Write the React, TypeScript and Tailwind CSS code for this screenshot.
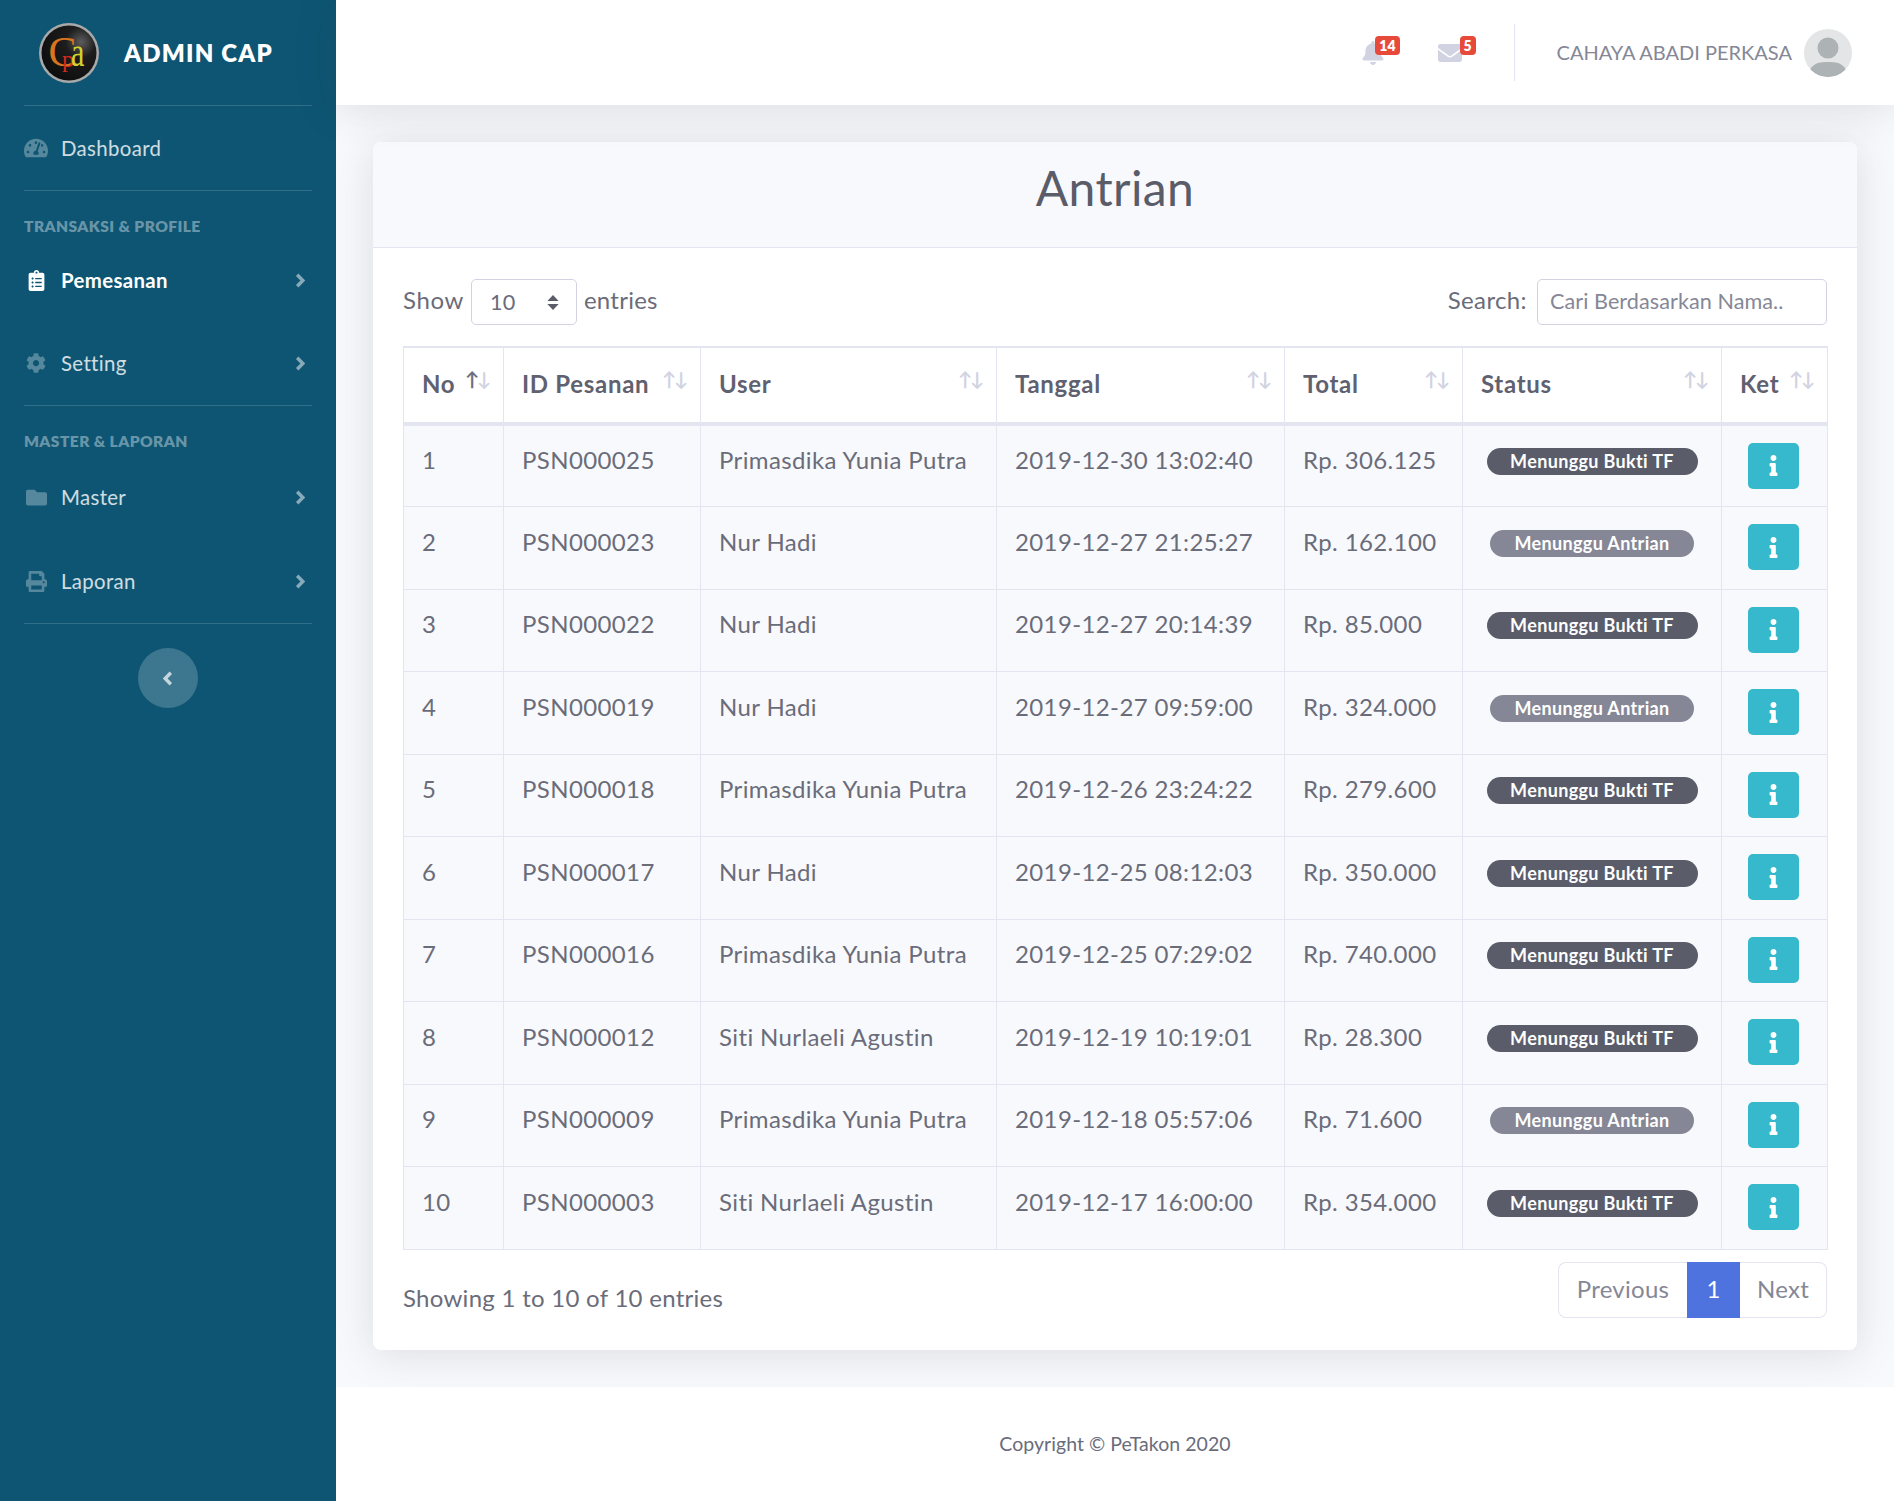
import {
  FaBell,
  FaClipboardList,
  FaCog,
  FaEnvelope,
  FaFolder,
  FaInfo,
  FaPrint,
  FaTachometerAlt,
} from "react-icons/fa";
import type { ReactNode } from "react";

const rows = [
  ["1", "PSN000025", "Primasdika Yunia Putra", "2019-12-30 13:02:40", "Rp. 306.125", "tf"],
  ["2", "PSN000023", "Nur Hadi", "2019-12-27 21:25:27", "Rp. 162.100", "antri"],
  ["3", "PSN000022", "Nur Hadi", "2019-12-27 20:14:39", "Rp. 85.000", "tf"],
  ["4", "PSN000019", "Nur Hadi", "2019-12-27 09:59:00", "Rp. 324.000", "antri"],
  ["5", "PSN000018", "Primasdika Yunia Putra", "2019-12-26 23:24:22", "Rp. 279.600", "tf"],
  ["6", "PSN000017", "Nur Hadi", "2019-12-25 08:12:03", "Rp. 350.000", "tf"],
  ["7", "PSN000016", "Primasdika Yunia Putra", "2019-12-25 07:29:02", "Rp. 740.000", "tf"],
  ["8", "PSN000012", "Siti Nurlaeli Agustin", "2019-12-19 10:19:01", "Rp. 28.300", "tf"],
  ["9", "PSN000009", "Primasdika Yunia Putra", "2019-12-18 05:57:06", "Rp. 71.600", "antri"],
  ["10", "PSN000003", "Siti Nurlaeli Agustin", "2019-12-17 16:00:00", "Rp. 354.000", "tf"],
];

const columns = [
  { label: "No", width: "w-[100px]", active: true },
  { label: "ID Pesanan", width: "w-[197px]" },
  { label: "User", width: "w-[296px]" },
  { label: "Tanggal", width: "w-[288px]" },
  { label: "Total", width: "w-[178px]" },
  { label: "Status", width: "w-[259px]" },
  { label: "Ket", width: "w-[106px]" },
];

function Logo() {
  return (
    <svg viewBox="0 0 60 60" className="h-[60px] w-[60px] shrink-0">
      <defs>
        <radialGradient id="ball" cx="0.72" cy="0.3" r="0.8">
          <stop offset="0" stopColor="#5c5c5c" />
          <stop offset="0.35" stopColor="#1d1d1d" />
          <stop offset="1" stopColor="#0d0d0d" />
        </radialGradient>
      </defs>
      <circle cx="30" cy="30" r="30" fill="#a9a9a9" />
      <circle cx="30" cy="30" r="27.5" fill="url(#ball)" />
      <g fontFamily="'Liberation Serif', serif">
        <text x="9.5" y="43" fontSize="42" fill="#d9741f">C</text>
        <text x="23" y="44" fontSize="24" fill="#d42a1e">p</text>
        <text transform="translate(32 43) scale(0.72 1)" fontSize="42" fill="#d2d32a">a</text>
      </g>
    </svg>
  );
}

function Chevron({ dir = "right", className }: { dir?: "left" | "right"; className: string }) {
  return (
    <svg viewBox="0 0 10 15" className={`h-[15px] w-[10px] ${className}`}>
      <path d={dir === "right" ? "M2.2 1.8 L7.8 7.5 L2.2 13.2" : "M7.8 1.8 L2.2 7.5 L7.8 13.2"} fill="none" stroke="currentColor" strokeWidth="3.4" />
    </svg>
  );
}

function NavItem({
  icon,
  label,
  active,
  caret = true,
}: {
  icon: ReactNode;
  label: string;
  active?: boolean;
  caret?: boolean;
}) {
  return (
    <div className="flex h-[84px] items-center px-6">
      <span className={`flex w-[24px] justify-center ${active ? "text-white" : "text-white/30"}`}>{icon}</span>
      <span className={`ml-[13px] flex-1 text-[20.4px] tracking-[0.35px] ${active ? "font-bold text-white" : "text-white/80"}`}>{label}</span>
      {caret && <Chevron className="mr-[7px] text-white/50" />}
    </div>
  );
}

function SectionTitle({ children }: { children: ReactNode }) {
  return <div className="px-6 text-[15.6px] font-extrabold leading-[24px] tracking-[0.4px] text-white/40">{children}</div>;
}

function SortArrows({ active }: { active?: boolean }) {
  return (
    <span className="flex text-[19px] leading-none tracking-normal">
      <span className={`flex w-[12px] justify-center ${active ? "text-[#6e707e]" : "text-[#d1d3e2]"}`}>↑</span>
      <span className="flex w-[12px] justify-center text-[#d1d3e2]">↓</span>
    </span>
  );
}

function Sidebar() {
  return (
    <aside className="flex w-[336px] shrink-0 flex-col bg-[#0d5573]">
      <div className="flex h-[105px] items-center pl-[39px]">
        <Logo />
        <span className="ml-[25px] text-[24px] font-extrabold tracking-[0.05em] text-white">ADMIN CAP</span>
      </div>
      <div className="mx-6 border-t border-white/15" />
      <NavItem icon={<FaTachometerAlt className="text-[24px]" />} label="Dashboard" caret={false} />
      <div className="mx-6 border-t border-white/15" />
      <div className="pt-[23px]"><SectionTitle>TRANSAKSI &amp; PROFILE</SectionTitle></div>
      <div className="-mb-px"><NavItem icon={<FaClipboardList className="text-[21px]" />} label="Pemesanan" active /></div>
      <NavItem icon={<FaCog className="text-[20px]" />} label="Setting" />
      <div className="mx-6 border-t border-white/15" />
      <div className="pt-[23px]"><SectionTitle>MASTER &amp; LAPORAN</SectionTitle></div>
      <div className="mt-[2px]"><NavItem icon={<FaFolder className="text-[21px]" />} label="Master" /></div>
      <NavItem icon={<FaPrint className="text-[21px]" />} label="Laporan" />
      <div className="mx-6 border-t border-white/15" />
      <div className="flex justify-center pt-6">
        <button className="flex h-[60px] w-[60px] items-center justify-center rounded-full bg-white/20">
          <Chevron dir="left" className="text-white/70" />
        </button>
      </div>
    </aside>
  );
}

function Topbar() {
  return (
    <header className="relative z-10 flex h-[105px] items-center justify-end bg-white pr-[42px] shadow-[0_4px_42px_rgba(58,59,69,0.15)]">
      <div className="relative mr-[53px] text-[#d1d3e2]">
        <FaBell className="text-[24px]" />
        <span className="absolute -right-[15px] -top-[5px] flex h-[19px] min-w-[23px] items-center justify-center rounded-[4px] bg-[#e74a3b] px-1 text-[14px] font-extrabold text-white">14</span>
      </div>
      <div className="relative mr-[52px] text-[#d1d3e2]">
        <FaEnvelope className="text-[24px]" />
        <span className="absolute -right-[14px] -top-[5px] flex h-[19px] min-w-[16px] items-center justify-center rounded-[4px] bg-[#e74a3b] text-[14px] font-extrabold text-white">5</span>
      </div>
      <div className="h-[57px] border-l border-[#e3e6f0]" />
      <span className="ml-[42px] pb-[2px] text-[20px] text-[#858796]">CAHAYA ABADI PERKASA</span>
      <span className="ml-3 flex h-12 w-12 items-center justify-center overflow-hidden rounded-full bg-[#e3e5e7]">
        <svg viewBox="0 0 48 48" className="h-12 w-12">
          <circle cx="24" cy="19" r="10.5" fill="#adb2b5" />
          <path d="M6 41 C10 33 17 33 24 33 C31 33 38 33 42 41 C37 46 31 48 24 48 C17 48 11 46 6 41 Z" fill="#adb2b5" />
        </svg>
      </span>
    </header>
  );
}

function StatusBadge({ kind }: { kind: string }) {
  return kind === "tf" ? (
    <span className="inline-flex h-[27px] w-[211px] items-center justify-center rounded-full bg-[#5a5c69] text-[18px] font-bold tracking-[0.35px] text-white">Menunggu Bukti TF</span>
  ) : (
    <span className="inline-flex h-[27px] w-[204px] items-center justify-center rounded-full bg-[#858796] text-[18px] font-bold tracking-[0.35px] text-white">Menunggu Antrian</span>
  );
}

function OrdersTable() {
  return (
    <table className="w-[1424px] table-fixed border-collapse text-[24px] tracking-[0.38px] text-[#6a6c7a]">
      <colgroup>
        {columns.map((c) => (
          <col key={c.label} className={c.width} />
        ))}
      </colgroup>
      <thead>
        <tr className="h-[77px]">
          {columns.map((c) => (
            <th key={c.label} className="border border-t-2 border-b-4 border-[#e3e6f0] px-[18px] pb-[3px] text-left font-bold text-[#5f6170]">
              <div className="flex items-start justify-between">
                <span className="tracking-[0.7px] whitespace-nowrap">{c.label}</span>
                <span className="-mr-[5px] mt-[3px]">
                  <SortArrows active={c.active} />
                </span>
              </div>
            </th>
          ))}
        </tr>
      </thead>
      <tbody>
        {rows.map((r) => (
          <tr key={r[0]} className="h-[82.5px] bg-[#f8f9fc]">
            {r.slice(0, 5).map((v, i) => (
              <td key={i} className="border border-[#e3e6f0] px-[18px] pb-[12px] align-middle whitespace-nowrap">{v}</td>
            ))}
            <td className="border border-[#e3e6f0] pb-[14px] text-center align-middle">
              <StatusBadge kind={r[5]} />
            </td>
            <td className="border border-[#e3e6f0] pr-[2px] pb-[1px] text-center align-middle">
              <button className="inline-flex h-[46px] w-[51px] items-center justify-center rounded-[5px] bg-[#36b9cc] text-[21px] text-white">
                <FaInfo />
              </button>
            </td>
          </tr>
        ))}
      </tbody>
    </table>
  );
}

function OrdersCard() {
  return (
    <section className="rounded-[8px] bg-white shadow-[0_4px_42px_rgba(58,59,69,0.15)]">
      <div className="flex h-[106px] items-center justify-center rounded-t-[8px] border-b border-[#e3e6f0] bg-[#f8f9fc] pb-[14px]">
        <h1 className="text-[48px] tracking-[0.4px] text-[#5a5c69]">Antrian</h1>
      </div>
      <div className="px-[30px] pb-[32px]">
        <div className="flex h-[98px] items-center justify-between pt-[10px] text-[24px] tracking-[0.38px] text-[#6a6c7a]">
          <label className="flex items-center">
            <span className="pb-[5px] tracking-[0.6px]">Show</span>
            <span className="mx-[7px] flex h-[46px] w-[106px] items-center justify-between rounded-[5px] border border-[#d1d3e2] pl-[18px] pr-[17px] text-[21.6px]">
              10
              <svg viewBox="0 0 12 16" className="h-[15px] w-3 fill-[#5a5c69]">
                <path d="M6 0 L12 6.5 H0 Z M6 16 L0 9.5 H12 Z" />
              </svg>
            </span>
            <span className="pb-[5px] tracking-[0.25px]">entries</span>
          </label>
          <label className="flex items-center">
            <span className="pb-[4px]">Search:</span>
            <span className="ml-[10px] flex h-[46px] w-[290px] items-center rounded-[5px] border border-[#d1d3e2] px-3 pb-[2px] text-[21.6px] tracking-[0.06px] text-[#858796]">
              Cari Berdasarkan Nama..
            </span>
          </label>
        </div>
        <OrdersTable />
        <div className="flex items-start justify-between pt-[12px] text-[24px] tracking-[0.28px]">
          <div className="pt-[18px] text-[#6a6c7a]">Showing 1 to 10 of 10 entries</div>
          <div className="flex h-[56px] text-[#858796]">
            <span className="flex w-[129px] items-center justify-center rounded-l-[8px] border border-r-0 border-[#e3e6f0] pb-[2px]">Previous</span>
            <span className="flex w-[53px] items-center justify-center bg-[#4e73df] pb-[2px] text-white">1</span>
            <span className="flex w-[87px] items-center justify-center rounded-r-[8px] border border-l-0 border-[#e3e6f0] pb-[2px]">Next</span>
          </div>
        </div>
      </div>
    </section>
  );
}

export default function App() {
  return (
    <div className="flex min-h-[1501px] font-['Lato','Noto_Sans',sans-serif]">
      <Sidebar />
      <div className="flex min-w-0 flex-1 flex-col">
        <Topbar />
        <main className="flex-1 bg-[#f8f9fc] px-[37px] py-[37px]">
          <OrdersCard />
        </main>
        <footer className="flex h-[114px] items-center justify-center bg-white text-[19.5px] tracking-[0.05px] text-[#6a6c7a]">
          Copyright © PeTakon 2020
        </footer>
      </div>
    </div>
  );
}
